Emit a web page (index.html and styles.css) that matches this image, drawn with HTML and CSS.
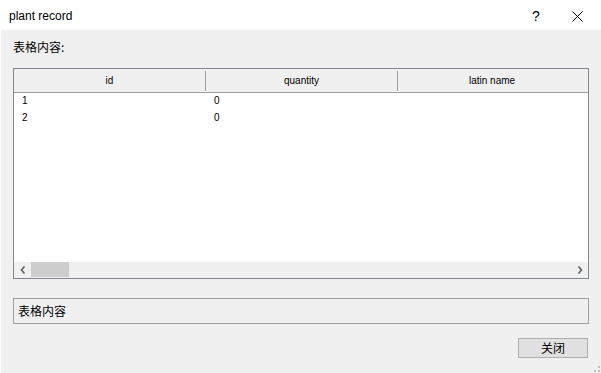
FILE: index.html
```html
<!DOCTYPE html>
<html>
<head>
<meta charset="utf-8">
<link rel="stylesheet" href="styles.css">
</head>
<body>
<div class="window">
  <div class="titlebar">
    <span class="title">plant record</span>
    <span class="help">?</span>
    <span class="close">
      <svg width="11" height="11" viewBox="0 0 11 11"><path d="M0.5 0.5 L10.5 10.5 M10.5 0.5 L0.5 10.5" stroke="#000" stroke-width="1" fill="none"/></svg>
    </span>
  </div>
  <div class="body">
    <div class="label">表格内容:</div>
    <div class="grid">
      <div class="header">
        <div class="hcell">id</div>
        <div class="hcell">quantity</div>
        <div class="hcell last">latin name</div>
      </div>
      <div class="rows">
        <div class="row"><div class="cell">1</div><div class="cell">0</div><div class="cell"></div></div>
        <div class="row"><div class="cell">2</div><div class="cell">0</div><div class="cell"></div></div>
      </div>
      <div class="hscroll">
        <span class="arrow">
          <svg width="6" height="8" viewBox="0 0 6 8"><path d="M4.5 0.5 L1.5 4 L4.5 7.5" stroke="#606060" stroke-width="1.6" fill="none"/></svg>
        </span>
        <div class="track"><div class="thumb"></div></div>
        <span class="arrow">
          <svg width="6" height="8" viewBox="0 0 6 8"><path d="M1.5 0.5 L4.5 4 L1.5 7.5" stroke="#606060" stroke-width="1.6" fill="none"/></svg>
        </span>
      </div>
    </div>
    <div class="textbox">表格内容</div>
    <div class="footer">
      <button class="btn">关闭</button>
    </div>
    <div class="grip">
      <svg width="10" height="10" viewBox="0 0 10 10">
        <rect x="8" y="0" width="2" height="2" fill="#bcbcbc"/>
        <rect x="4" y="4" width="2" height="2" fill="#bcbcbc"/>
        <rect x="8" y="4" width="2" height="2" fill="#bcbcbc"/>
        <rect x="0" y="8" width="2" height="2" fill="#bcbcbc"/>
        <rect x="4" y="8" width="2" height="2" fill="#bcbcbc"/>
        <rect x="8" y="8" width="2" height="2" fill="#bcbcbc"/>
      </svg>
    </div>
  </div>
</div>
</body>
</html>
```

FILE: styles.css
```css
html, body {
  margin: 0;
  padding: 0;
  background: #ffffff;
}
body {
  width: 601px;
  height: 373px;
  overflow: hidden;
  font-family: "Liberation Sans", Arial, sans-serif;
  color: #000;
}
.window {
  width: 601px;
  height: 373px;
  display: flex;
  flex-direction: column;
}
.titlebar {
  height: 30px;
  background: #ffffff;
  display: flex;
  align-items: center;
  font-size: 12px;
}
.title {
  margin-left: 9px;
  flex: 1;
  position: relative;
  top: 1px;
}
.help {
  font-size: 14px;
  width: 14px;
  margin-right: 26px;
  position: relative;
  top: 1px;
}
.close {
  width: 11px;
  height: 11px;
  margin-right: 18px;
  display: flex;
  position: relative;
  top: 1px;
}
.body {
  flex: 1;
  background: #f0f0f0;
  margin-left: 1px;
  padding: 0 12px 0 12px;
  display: flex;
  flex-direction: column;
  position: relative;
}
.label {
  font-family: "Noto Sans CJK SC", sans-serif;
  font-size: 12px;
  line-height: 16px;
  margin-top: 9px;
  height: 16px;
}
.grid {
  margin-top: 13px;
  height: 209px;
  width: 574px;
  border: 1px solid #828790;
  background: #ffffff;
  display: flex;
  flex-direction: column;
  font-size: 10px;
}
.header {
  display: flex;
  height: 23px;
  background: #f0f0f0;
  border-bottom: 1px solid #a0a0a0;
  overflow: hidden;
}
.hcell {
  width: 192px;
  flex: none;
  text-align: center;
  height: 20px;
  margin-top: 2px;
  line-height: 20px;
  border-right: 1px solid #a0a0a0;
  box-sizing: border-box;
}
.hcell.last {
  width: 240px;
  border-right: none;
  text-align: left;
  padding-left: 71px;
}
.rows {
  flex: 1;
}
.row {
  display: flex;
  height: 17px;
  line-height: 15px;
}
.cell {
  width: 192px;
  flex: none;
  padding-left: 8px;
  box-sizing: border-box;
  font-size: 10px;
}
.hscroll {
  height: 16px;
  background: #f0f0f0;
  display: flex;
  align-items: center;
}
.arrow {
  width: 17px;
  height: 16px;
  display: flex;
  align-items: center;
  justify-content: center;
  flex: none;
}
.track {
  flex: 1;
  height: 16px;
  display: flex;
  align-items: stretch;
}
.thumb {
  width: 38px;
  height: 15px;
  background: #cdcdcd;
}
.textbox {
  margin-top: 19px;
  height: 24px;
  border: 1px solid #a0a0a0;
  background: #f0f0f0;
  font-family: "Noto Sans CJK SC", sans-serif;
  font-size: 12px;
  line-height: 24px;
  padding-left: 4px;
  box-sizing: content-box;
  width: 570px;
}
.footer {
  display: flex;
  justify-content: flex-end;
  margin-top: 14px;
  padding-right: 1px;
}
.btn {
  width: 70px;
  height: 20px;
  background: #e1e1e1;
  border: 1px solid #adadad;
  font-family: "Noto Sans CJK SC", sans-serif;
  font-size: 12px;
  line-height: 16px;
  padding: 0;
  margin: 0;
  color: #000;
}
.grip {
  position: absolute;
  right: 1px;
  bottom: 1px;
  width: 10px;
  height: 10px;
}
```
